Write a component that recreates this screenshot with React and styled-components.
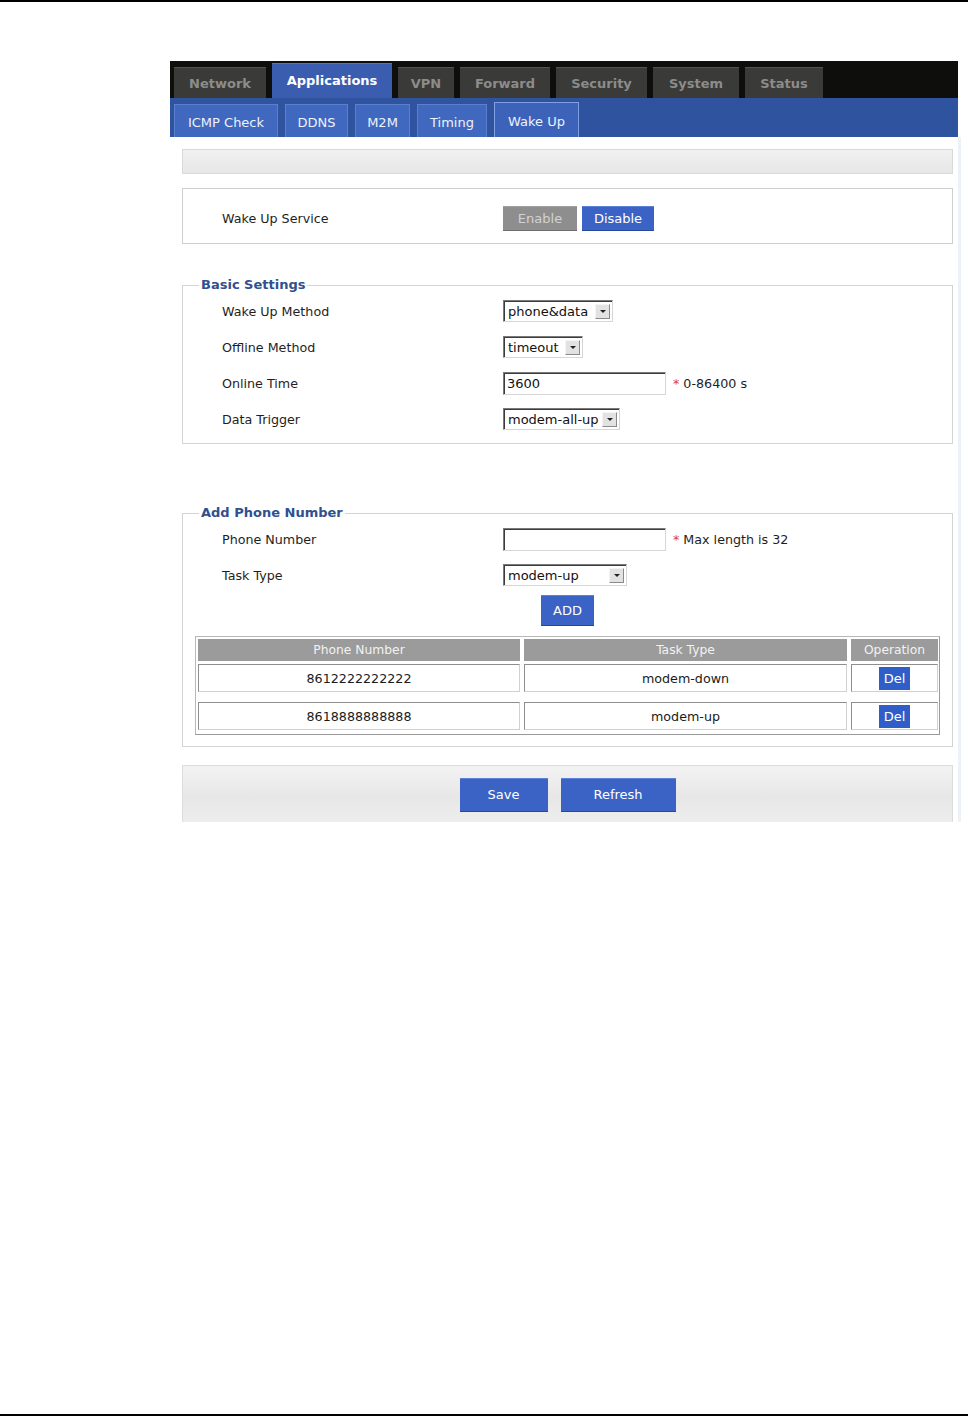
import React from 'react';
import styled, { createGlobalStyle } from 'styled-components';

const GlobalStyle = createGlobalStyle`
  body {
    margin: 0;
    background: #fff;
    font-family: "DejaVu Sans", Verdana, sans-serif;
  }
`;

const Page = styled.div`
  min-height: 1416px;
  box-sizing: border-box;
  border-top: 2px solid #000;
  border-bottom: 2px solid #000;
  display: flex;
  flex-direction: column;
`;

const Screen = styled.div`
  width: 788px;
  margin: 59px 0 0 170px;
`;

const TopBar = styled.div`
  height: 37px;
  background: #0e0e0c;
  display: flex;
  align-items: flex-end;
  gap: 6px;
  padding-left: 4px;
`;

const Tab = styled.div`
  width: ${(p) => p.$w}px;
  height: ${(p) => (p.$active ? 35 : 31)}px;
  box-sizing: border-box;
  display: flex;
  align-items: center;
  justify-content: center;
  padding-bottom: ${(p) => (p.$active ? 1 : 0)}px;
  background: ${(p) => (p.$active ? '#3a5db0' : '#3a3a38')};
  border-top: 1px solid ${(p) => (p.$active ? '#4f73c4' : '#525250')};
  color: ${(p) => (p.$active ? '#fff' : '#8c8c8a')};
  font-weight: bold;
  font-size: 13px;
`;

const SubBar = styled.div`
  height: 39px;
  background: #30539f;
  display: flex;
  align-items: flex-end;
  gap: 7px;
  padding-left: 4px;
`;

const SubTab = styled.div`
  width: ${(p) => p.$w}px;
  height: ${(p) => (p.$active ? 35 : 33)}px;
  box-sizing: border-box;
  display: flex;
  align-items: center;
  justify-content: center;
  padding-top: 2px;
  background: ${(p) => (p.$active ? '#3c63b9' : '#4068be')};
  border: 1px solid ${(p) => (p.$active ? '#7f9fde' : '#5a7fcc')};
  border-bottom: none;
  color: #eef2fb;
  font-size: 13px;
`;

const Body = styled.div`
  box-sizing: border-box;
  width: 788px;
  padding: 12px 5px 0 12px;
  box-shadow: 3px 0 0 #edf2f8;
`;

const GreyBar = styled.div`
  height: 25px;
  box-sizing: border-box;
  background: linear-gradient(#f1f1f1, #e7e7e7);
  border: 1px solid #d9d9d9;
`;

const ServiceBox = styled.div`
  margin-top: 14px;
  height: 56px;
  box-sizing: border-box;
  border: 1px solid #cfcfcf;
  display: flex;
  align-items: center;
  padding: 5px 0 0 39px;
`;

const Label = styled.div`
  width: 281px;
  flex-shrink: 0;
  font-size: 12.7px;
  color: #1e1e1e;
`;

const Button = styled.button`
  width: ${(p) => p.$w}px;
  height: ${(p) => p.$h}px;
  margin: 0;
  padding: 0;
  font-family: inherit;
  font-size: 13px;
  border: none;
  border-bottom: 1px solid ${(p) => (p.$grey ? '#6e6e6e' : '#26489a')};
  background: ${(p) => (p.$grey ? '#8e8e8e' : '#3b63c6')};
  color: ${(p) => (p.$grey ? '#d2d2d2' : '#fff')};
  box-shadow: inset 0 1px 0 ${(p) => (p.$grey ? '#a0a0a0' : '#5a80d8')};
`;

const ButtonPair = styled.div`
  display: flex;
  gap: 5px;
`;

const Fieldset = styled.fieldset`
  margin: ${(p) => p.$top}px 0 0;
  padding: 0 12px ${(p) => p.$bottom}px 12px;
  border: 1px solid #d4d4d4;
  min-width: 0;
`;

const Legend = styled.legend`
  margin-left: 4px;
  padding: 0 2px;
  font-size: 13px;
  line-height: 16px;
  font-weight: bold;
  color: #30508f;
`;

const Row = styled.div`
  height: 36px;
  display: flex;
  align-items: center;
  padding-left: 27px;
`;

const SelectBox = styled.div`
  width: ${(p) => p.$w}px;
  height: 22px;
  box-sizing: border-box;
  display: flex;
  align-items: center;
  border: 1px solid;
  border-color: #7a7a7a #d6d6d6 #d6d6d6 #7a7a7a;
  box-shadow: inset 1px 1px 0 #3c3c3c;
  background: #fff;
  padding-left: 4px;
  font-size: 13px;
  color: #111;
`;

const Arrow = styled.span`
  margin-left: auto;
  margin-right: 2px;
  width: 15px;
  height: 15px;
  box-sizing: border-box;
  display: flex;
  align-items: center;
  justify-content: center;
  background: #e2e2e2;
  border: 1px solid;
  border-color: #f4f4f4 #8a8a8a #8a8a8a #f4f4f4;

  &::after {
    content: '';
    border-left: 3px solid transparent;
    border-right: 3px solid transparent;
    border-top: 3px solid #222;
  }
`;

const Input = styled.div`
  width: 163px;
  height: 23px;
  box-sizing: border-box;
  display: flex;
  align-items: center;
  border: 1px solid;
  border-color: #7a7a7a #d6d6d6 #d6d6d6 #7a7a7a;
  box-shadow: inset 1px 1px 0 #3c3c3c;
  background: #fff;
  padding-left: 3px;
  font-size: 13px;
  color: #111;
`;

const Hint = styled.span`
  margin-left: 7px;
  font-size: 12.7px;
  color: #1e1e1e;
`;

const Star = styled.span`
  color: #de3b3b;
  margin-right: 4px;
`;

const AddRow = styled.div`
  margin-top: 2px;
  padding-left: 346px;
`;

const Table = styled.div`
  margin-top: 10px;
  border: 1px solid;
  border-color: #b8b8b8 #9a9a9a #9a9a9a #b8b8b8;
  padding: 2px 2px 4px;
  display: flex;
  flex-direction: column;
`;

const TableRow = styled.div`
  display: grid;
  grid-template-columns: 322px 323px 87px;
  column-gap: 4px;
  margin-top: ${(p) => p.$top || 0}px;
`;

const HeadCell = styled.div`
  height: 22px;
  display: flex;
  align-items: center;
  justify-content: center;
  background: #9b9b9b;
  color: #f2f2f2;
  font-size: 12.3px;
`;

const Cell = styled.div`
  height: 28px;
  box-sizing: border-box;
  display: flex;
  align-items: center;
  justify-content: center;
  background: #fff;
  border: 1px solid;
  border-color: #8e8e8e #d0d0d0 #d0d0d0 #8e8e8e;
  font-size: 12.7px;
  color: #1a1a1a;
`;

const DelButton = styled.button`
  width: 31px;
  height: 23px;
  margin: 0;
  padding: 0;
  border: none;
  background: #2f5ec8;
  color: #fff;
  font-family: inherit;
  font-size: 13px;
`;

const BottomBar = styled.div`
  margin-top: 18px;
  height: 57px;
  box-sizing: border-box;
  border: 1px solid #dcdcdc;
  border-bottom: none;
  background: linear-gradient(#f3f3f3, #e7e7e7 55%, #ededed);
  display: flex;
  justify-content: center;
  align-items: flex-start;
  gap: 13px;
  padding-top: 12px;
`;

const topTabs = [
  ['Network', 92],
  ['Applications', 120, true],
  ['VPN', 56],
  ['Forward', 90],
  ['Security', 91],
  ['System', 86],
  ['Status', 78],
];

const subTabs = [
  ['ICMP Check', 104],
  ['DDNS', 63],
  ['M2M', 55],
  ['Timing', 70],
  ['Wake Up', 85, true],
];

const phones = [
  ['8612222222222', 'modem-down'],
  ['8618888888888', 'modem-up'],
];

const Select = ({ w, value }) => (
  <SelectBox $w={w}>
    {value}
    <Arrow />
  </SelectBox>
);

const App = () => {
  return (
    <Page>
      <GlobalStyle />
      <Screen>
        <TopBar>
          {topTabs.map(([name, w, active]) => (
            <Tab key={name} $w={w} $active={active}>
              {name}
            </Tab>
          ))}
        </TopBar>
        <SubBar>
          {subTabs.map(([name, w, active]) => (
            <SubTab key={name} $w={w} $active={active}>
              {name}
            </SubTab>
          ))}
        </SubBar>

        <Body>
          <GreyBar />

          <ServiceBox>
            <Label>Wake Up Service</Label>
            <ButtonPair>
              <Button $w={74} $h={25} $grey>
                Enable
              </Button>
              <Button $w={72} $h={25}>
                Disable
              </Button>
            </ButtonPair>
          </ServiceBox>

          <Fieldset $top={33} $bottom={6}>
            <Legend>Basic Settings</Legend>
            <Row>
              <Label>Wake Up Method</Label>
              <Select w={110} value="phone&data" />
            </Row>
            <Row>
              <Label>Offline Method</Label>
              <Select w={80} value="timeout" />
            </Row>
            <Row>
              <Label>Online Time</Label>
              <Input>3600</Input>
              <Hint>
                <Star>*</Star>0-86400 s
              </Hint>
            </Row>
            <Row>
              <Label>Data Trigger</Label>
              <Select w={117} value="modem-all-up" />
            </Row>
          </Fieldset>

          <Fieldset $top={61} $bottom={11}>
            <Legend>Add Phone Number</Legend>
            <Row>
              <Label>Phone Number</Label>
              <Input />
              <Hint>
                <Star>*</Star>Max length is 32
              </Hint>
            </Row>
            <Row>
              <Label>Task Type</Label>
              <Select w={124} value="modem-up" />
            </Row>
            <AddRow>
              <Button $w={53} $h={31}>
                ADD
              </Button>
            </AddRow>
            <Table>
              <TableRow>
                <HeadCell>Phone Number</HeadCell>
                <HeadCell>Task Type</HeadCell>
                <HeadCell>Operation</HeadCell>
              </TableRow>
              {phones.map(([num, type], i) => (
                <TableRow key={num} $top={i === 0 ? 3 : 10}>
                  <Cell>{num}</Cell>
                  <Cell>{type}</Cell>
                  <Cell>
                    <DelButton>Del</DelButton>
                  </Cell>
                </TableRow>
              ))}
            </Table>
          </Fieldset>

          <BottomBar>
            <Button $w={88} $h={34}>
              Save
            </Button>
            <Button $w={115} $h={34}>
              Refresh
            </Button>
          </BottomBar>
        </Body>
      </Screen>
    </Page>
  );
};

export default App;
